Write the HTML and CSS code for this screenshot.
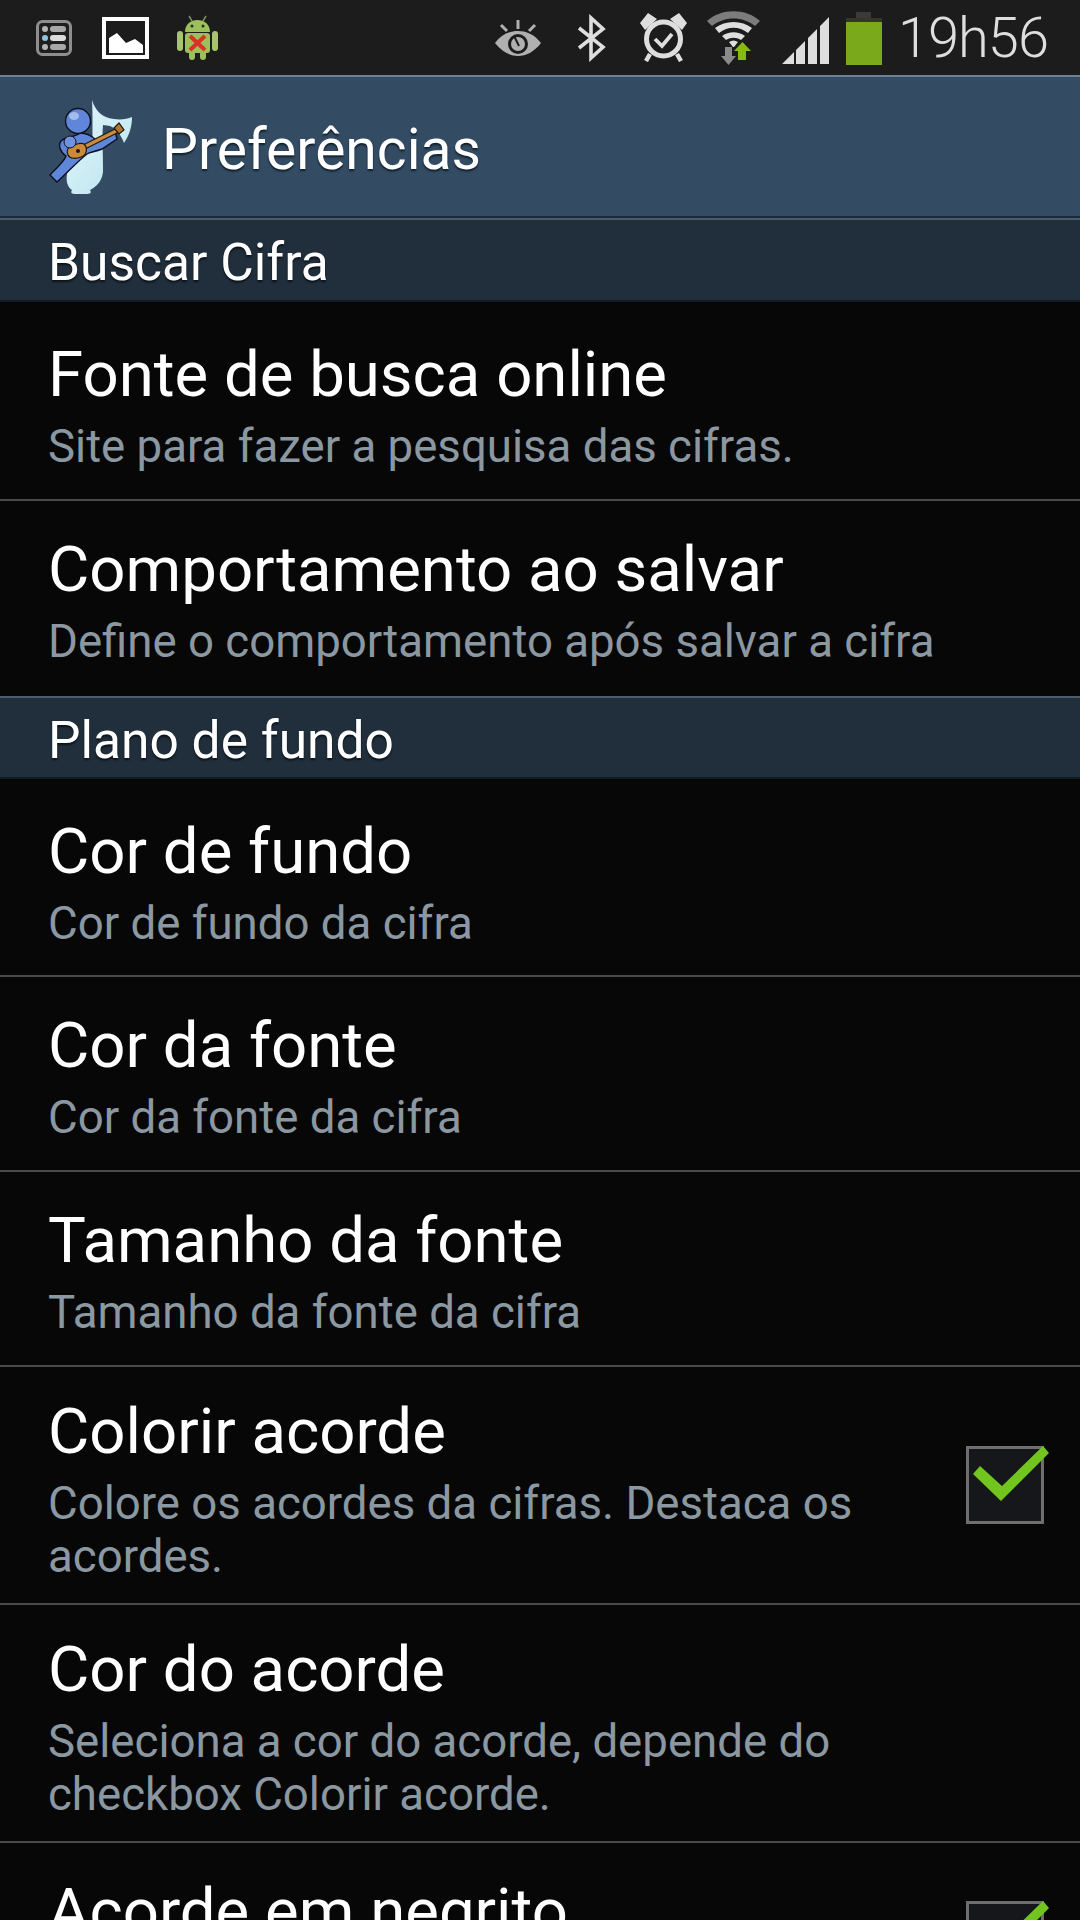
FILE: index.html
```html
<!DOCTYPE html>
<html lang="pt">

<head>
    <meta charset="UTF-8">
    <meta name="viewport" content="width=device-width, initial-scale=1.0">
    <title>Preferências</title>
    <link rel="stylesheet" href="styles.css">
</head>

<body>
    <div class="screen">
        <div class="status-bar">
            <div class="status-left">
                <svg class="ic-tasks" viewBox="0 0 36 36">
                    <rect x="1.500" y="1.500" width="33" height="33" rx="5" fill="#1f1f1f" stroke="#8e8e8e" stroke-width="3"/>
                    <rect x="14" y="6" width="16" height="6" rx="3" fill="#a8a8a8"/>
                    <rect x="14" y="15" width="16" height="6" rx="3" fill="#dcdcdc"/>
                    <rect x="14" y="24" width="16" height="6" rx="3" fill="#a8a8a8"/>
                    <circle cx="9" cy="9" r="3" fill="#b5b5b5"/>
                    <circle cx="9" cy="18" r="3" fill="#8fc4e0"/>
                    <circle cx="9" cy="27" r="3" fill="#b5b5b5"/>
                </svg>
                <svg class="ic-picture" viewBox="0 0 47 42">
                    <rect x="2" y="2" width="43" height="38" fill="#1c1c1c" stroke="#fff" stroke-width="4"/>
                    <path d="M7 36V21L15 16L24 26L33 22L41 28V36Z" fill="#fff"/>
                </svg>
                <svg class="ic-android" viewBox="0 0 41 45">
                    <path d="M12 1L15 6M29 1L26 6" stroke="#7d8f58" stroke-width="1.500"/>
                    <path d="M8 17C8 9 14 5 20.500 5C27 5 33 9 33 17Z" fill="#9cc05a"/>
                    <circle cx="15" cy="11" r="1.500" fill="#27301a"/>
                    <circle cx="26" cy="11" r="1.500" fill="#27301a"/>
                    <rect x="8" y="18" width="25" height="20" rx="3" fill="#9cc05a"/>
                    <rect x="0" y="16" width="6" height="20" rx="3" fill="#a9c56c"/>
                    <rect x="35" y="16" width="6" height="20" rx="3" fill="#a9c56c"/>
                    <rect x="12" y="36" width="6" height="9" rx="3" fill="#9cc05a"/>
                    <rect x="23" y="36" width="6" height="9" rx="3" fill="#9cc05a"/>
                    <path d="M13 21L28 35M28 21L13 35" stroke="#d8322a" stroke-width="4"/>
                </svg>
            </div>
            <div class="status-right">
                <svg class="ic-eye" viewBox="0 0 46 36">
                    <path d="M23 0V9M6 5L12 11M40 5L34 11" stroke="#b0b0b0" stroke-width="3"/>
                    <path d="M0 23C7 14 15 11 23 11C31 11 39 14 46 23C39 32 31 36 23 36C15 36 7 32 0 23Z" fill="#b0b0b0"/>
                    <circle cx="23" cy="24" r="10" fill="#1c1c1c"/>
                    <circle cx="23" cy="24" r="7" fill="#b0b0b0"/>
                    <path d="M19 16L24 26" stroke="#1c1c1c" stroke-width="2"/>
                </svg>
                <svg class="ic-bt" viewBox="0 0 29 48">
                    <path d="M2 14L26 33L14 44V4L26 15L2 34" fill="none" stroke="#dedede" stroke-width="3.600"/>
                </svg>
                <svg class="ic-alarm" viewBox="0 0 47 49">
                    <circle cx="23.500" cy="26" r="17" fill="none" stroke="#dedede" stroke-width="5"/>
                    <path d="M0 10L8 0L17 6L5 17ZM47 10L39 0L30 6L42 17Z" fill="#dedede"/>
                    <path d="M10 41L6 48M37 41L41 48" stroke="#dedede" stroke-width="4.500"/>
                    <path d="M15 26L22 33L32 21" fill="none" stroke="#dedede" stroke-width="3.800"/>
                </svg>
                <svg class="ic-wifi" viewBox="0 0 53 54">
                    <path d="M0 10C14 -3 39 -3 53 10L48 15C36 5 17 5 5 15Z" fill="#7c7c7c"/>
                    <path d="M8 17C18 9 35 9 45 17L41 22C32 15 21 15 12 22Z" fill="#dedede"/>
                    <path d="M15 25C22 20 31 20 38 25L34 29C29 26 24 26 19 29Z" fill="#dedede"/>
                    <path d="M22 31C25 29 28 29 31 31L27 36H26Z" fill="#dedede"/>
                    <path d="M18 36H25V45H29L21.500 54L14 45H18Z" fill="#8a8a8a"/>
                    <path d="M31 49V40H27L35.500 31L44 40H39V49Z" fill="#86bc12"/>
                </svg>
                <svg class="ic-signal" viewBox="0 0 48 47">
                    <path d="M0 47L12 35V47ZM14 33L23 24V47H14ZM26 21L35 12V47H26ZM38 9L47 0V47H38Z" fill="#dedede"/>
                </svg>
                <div class="battery">
                    <div class="battery-cap"></div>
                    <div class="battery-top"></div>
                    <div class="battery-fill"></div>
                </div>
                <span class="clock">19h56</span>
            </div>
        </div>

        <div class="action-bar">
            <svg class="app-icon" viewBox="0 0 100 110">
                <defs>
                    <linearGradient id="noteFill" x1="0" y1="0" x2="1" y2="1">
                        <stop offset="0" stop-color="#e4f7fa"/>
                        <stop offset="1" stop-color="#b7e3ee"/>
                    </linearGradient>
                </defs>
                <!-- nota -->
                <path d="M52 10C55 20 62 28 74 29C81 30 87 29 92 27C92 36 90 44 84 53C81 45 77 39 70 36L63 35C62 46 63 60 63 78C64 90 56 97 50 100C52 103 50 104 46 104H36C32 104 30 103 32 100C27 97 26 90 27 84C29 72 42 64 53 62C52 46 53 26 52 10Z" fill="url(#noteFill)"/>
                <!-- corpo -->
                <path d="M40 43C46 43 52 46 56 50L75 41L77 49L62 59C54 62 50 62 47 64C38 71 30 80 17 92L10 85C18 76 24 72 26 66C20 62 18 55 21 51C26 46 34 48 40 43Z" fill="#5f86d8" stroke="#0d1020" stroke-width="1.400"/>
                <!-- violao -->
                <path d="M44 57L76 41" stroke="#20150a" stroke-width="5.500"/>
                <path d="M44 57L76 41" stroke="#c98a3c" stroke-width="3.500"/>
                <path d="M74 38L79 33L84 40L79 44Z" fill="#b3742e" stroke="#20150a" stroke-width="1.200"/>
                <path d="M44 54C48 58 47 65 41 67C36 69 30 69 28 65C26 61 28 57 31 56C35 55 40 52 44 54Z" fill="#c98a3c" stroke="#20150a" stroke-width="1.200"/>
                <circle cx="38" cy="61" r="2" fill="#20150a"/>
                <circle cx="30" cy="52" r="6" fill="#6f93df" stroke="#0d1020" stroke-width="1"/>
                <!-- cabeca -->
                <circle cx="38" cy="31" r="12.500" fill="#5f86d8" stroke="#0d1020" stroke-width="1.400"/>
                <ellipse cx="34" cy="26" rx="5" ry="4" fill="#a3bcec"/>
            </svg>
            <span class="action-title">Preferências</span>
        </div>

        <div class="section">Buscar Cifra</div>
        <div class="pref first first-tall">
            <div class="pref-text">
                <div class="pref-title">Fonte de busca online</div>
                <div class="pref-desc">Site para fazer a pesquisa das cifras.</div>
            </div>
        </div>
        <div class="pref no-line">
            <div class="pref-text">
                <div class="pref-title">Comportamento ao salvar</div>
                <div class="pref-desc">Define o comportamento após salvar a cifra</div>
            </div>
        </div>

        <div class="section section-b">Plano de fundo</div>
        <div class="pref first">
            <div class="pref-text">
                <div class="pref-title">Cor de fundo</div>
                <div class="pref-desc">Cor de fundo da cifra</div>
            </div>
        </div>
        <div class="pref">
            <div class="pref-text">
                <div class="pref-title">Cor da fonte</div>
                <div class="pref-desc">Cor da fonte da cifra</div>
            </div>
        </div>
        <div class="pref">
            <div class="pref-text">
                <div class="pref-title">Tamanho da fonte</div>
                <div class="pref-desc">Tamanho da fonte da cifra</div>
            </div>
        </div>
        <div class="pref two-lines">
            <div class="pref-text">
                <div class="pref-title">Colorir acorde</div>
                <div class="pref-desc">Colore os acordes da cifras. Destaca os acordes.</div>
            </div>
            <div class="check">
                <svg class="check-mark" viewBox="0 0 84 56">
                    <path d="M7 28L14 20L36 40L77 0L83 7L35 55Z"/>
                </svg>
            </div>
        </div>
        <div class="pref two-lines">
            <div class="pref-text">
                <div class="pref-title">Cor do acorde</div>
                <div class="pref-desc">Seleciona a cor do acorde, depende do checkbox Colorir acorde.</div>
            </div>
        </div>
        <div class="pref">
            <div class="pref-text">
                <div class="pref-title">Acorde em negrito</div>
            </div>
            <div class="check">
                <svg class="check-mark" viewBox="0 0 84 56">
                    <path d="M7 28L14 20L36 40L77 0L83 7L35 55Z"/>
                </svg>
            </div>
        </div>
    </div>
</body>

</html>
```

FILE: styles.css
```css
* {
    padding: 0;
    margin: 0;
    box-sizing: border-box;
}

html,
body {
    width: 1080px;
    height: 1920px;
    overflow: hidden;
    background-color: #070707;
}

.screen {
    width: 1080px;
    height: 1920px;
    overflow: hidden;
    font-family: Roboto, "Liberation Sans", sans-serif;
    color: #fff;
}

/* barra de status */
.status-bar {
    height: 75px;
    background-color: #1c1c1c;
    display: flex;
    justify-content: space-between;
    align-items: center;
}

.status-left {
    display: flex;
    align-items: center;
    padding-left: 36px;
}

.status-right {
    display: flex;
    align-items: center;
    padding-right: 32px;
}

.ic-tasks {
    width: 36px;
    height: 36px;
    margin-right: 30px;
}

.ic-picture {
    width: 47px;
    height: 42px;
    margin-right: 28px;
}

.ic-android {
    width: 41px;
    height: 45px;
}

.ic-eye {
    width: 46px;
    height: 36px;
    margin-right: 36px;
}

.ic-bt {
    width: 29px;
    height: 48px;
    margin-right: 34px;
}

.ic-alarm {
    width: 47px;
    height: 49px;
    margin-right: 20px;
}

.ic-wifi {
    width: 53px;
    height: 54px;
    margin-right: 22px;
}

.ic-signal {
    width: 48px;
    height: 47px;
    margin-top: 5px;
    margin-right: 16px;
}

.battery {
    width: 36px;
    height: 53px;
    margin-top: 1px;
    margin-right: 16px;
    display: flex;
    flex-direction: column;
    align-items: center;
}

.battery-cap {
    width: 15px;
    height: 6px;
    background-color: #3a3a3a;
}

.battery-top {
    width: 100%;
    height: 4px;
    background-color: #33362e;
}

.battery-fill {
    width: 100%;
    flex: 1;
    background-color: #7aaa1c;
}

.clock {
    font-size: 56px;
    font-weight: 300;
    letter-spacing: -1px;
    color: #dedede;
}

/* action bar */
.action-bar {
    height: 143px;
    background-color: #344c63;
    border-top: 2px solid #6d8299;
    border-bottom: 2px solid #1a2a38;
    display: flex;
    align-items: center;
    padding-left: 40px;
}

.app-icon {
    width: 100px;
    height: 110px;
    margin-right: 22px;
    margin-bottom: 3px;
}

.action-title {
    font-size: 57px;
    margin-top: 6px;
    text-shadow: 0 2px 2px #10202e;
}

/* secoes */
.section {
    height: 84px;
    background-color: #212f3c;
    border-top: 2px solid #4a5c6c;
    border-bottom: 2px solid #131b22;
    font-size: 51.500px;
    line-height: 86px;
    padding-left: 48px;
    text-shadow: 0 2px 2px #0b131a;
}

.section-b {
    height: 83px;
}

/* itens */
.pref {
    height: 195px;
    display: flex;
    justify-content: space-between;
    align-items: center;
    border-bottom: 2px solid #4a4a4a;
    padding-left: 48px;
    padding-right: 36px;
}

.first {
    height: 198px;
}

.first-tall {
    height: 199px;
}

.two-lines {
    height: 238px;
}

.no-line {
    border-bottom: none;
}

.pref-text {
    width: 900px;
    align-self: flex-start;
    padding-top: 33px;
}

.first .pref-text {
    padding-top: 37px;
}

.two-lines .pref-text {
    padding-top: 29px;
}

.pref-title {
    font-size: 63.500px;
    line-height: 72px;
}

.pref-desc {
    margin-top: 9px;
    font-size: 45.600px;
    line-height: 53px;
    color: #8b98a1;
}

.check {
    width: 78px;
    height: 78px;
    margin-left: -60px;
    background-color: #16171b;
    border: 3px solid #6e6e6e;
    position: relative;
    flex-shrink: 0;
}

.check-mark {
    position: absolute;
    top: -3px;
    left: -3px;
    width: 84px;
    height: 56px;
    fill: #72c41e;
}
```
